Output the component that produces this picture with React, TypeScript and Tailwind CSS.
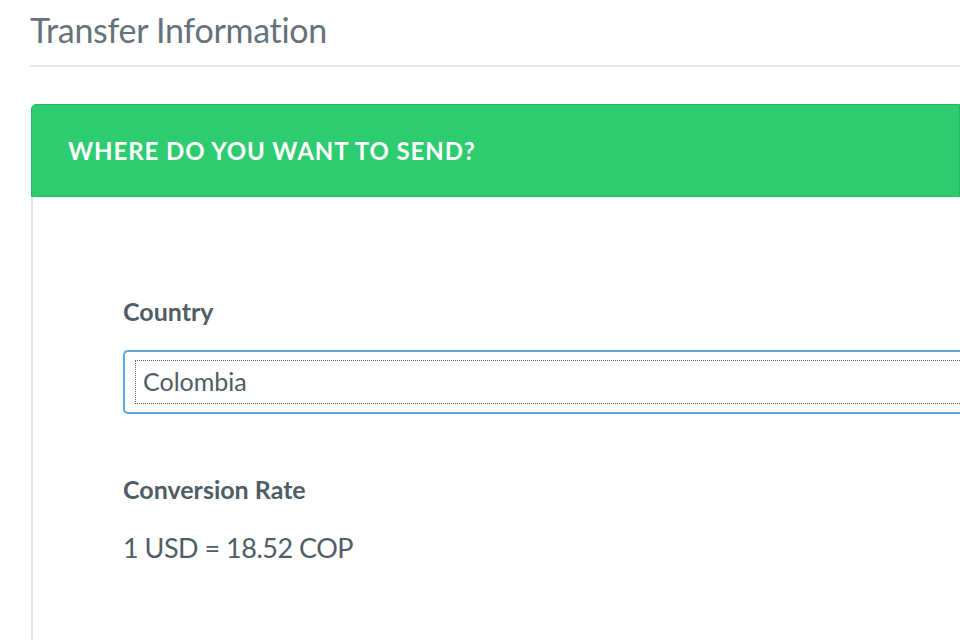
import React from "react";

export default function App() {
  return (
    <div className="w-[960px] h-[640px] overflow-hidden bg-white pl-[30px] font-['Lato','Open_Sans',sans-serif]">
      <h1 className="pt-[8px] text-[34px] leading-[44px] font-normal text-[#65727c] tracking-[-0.3px]">
        Transfer Information
      </h1>
      <div className="mt-[13px] h-[2px] bg-[#e9e9e9]" />
      <div className="mt-[37px] ml-[1px]">
        <div className="h-[93px] rounded-tl-[5px] border border-[#27b463] bg-[#2ecc71] pl-[36px] flex items-center">
          <span className="text-[24px] font-bold tracking-[0.9px] text-white">
            WHERE DO YOU WANT TO SEND?
          </span>
        </div>
        <div className="h-[460px] border-l-2 border-[#e3e3e3] pl-[90px] pt-[99px]">
          <div className="text-[25px] leading-[30px] font-bold text-[#4f5d66]">Country</div>
          <div className="mt-[24px] h-[64px] rounded-l-[5px] border-2 border-r-0 border-[#5ba8e0] pl-[10px] py-[8px]">
            <div className="h-full border border-r-0 border-dotted border-[#666] pl-[7px] flex items-center">
              <span className="text-[25px] text-[#4f5d66]">Colombia</span>
            </div>
          </div>
          <div className="mt-[60px] text-[25px] leading-[30px] font-bold text-[#4f5d66]">Conversion Rate</div>
          <div className="mt-[26px] text-[27px] leading-[36px] text-[#4f5d66] tracking-[-0.5px]">1 USD = 18.52 COP</div>
        </div>
      </div>
    </div>
  );
}
